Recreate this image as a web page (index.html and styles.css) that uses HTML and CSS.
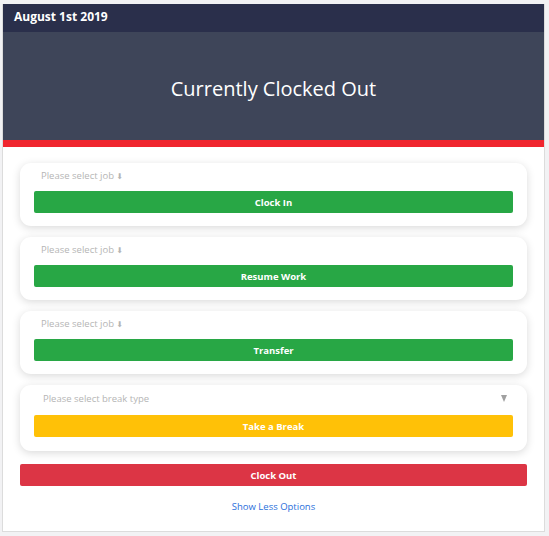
FILE: index.html
```html
<!DOCTYPE html>
<html>
<head>
<meta charset="utf-8">
<link rel="stylesheet" href="styles.css">
</head>
<body>
<div class="panel">
  <div class="date-bar">August 1st 2019</div>
  <div class="status">Currently Clocked Out</div>
  <div class="accent"></div>
  <div class="content">
    <div class="card">
      <div class="select">Please select job <span class="arrow-down">&#11015;</span></div>
      <button class="btn green">Clock In</button>
    </div>
    <div class="card">
      <div class="select">Please select job <span class="arrow-down">&#11015;</span></div>
      <button class="btn green">Resume Work</button>
    </div>
    <div class="card">
      <div class="select">Please select job <span class="arrow-down">&#11015;</span></div>
      <button class="btn green">Transfer</button>
    </div>
    <div class="card last">
      <div class="select break"><span>Please select break type</span><span class="caret"></span></div>
      <button class="btn yellow">Take a Break</button>
    </div>
    <button class="btn red">Clock Out</button>
    <a class="less" href="#">Show Less Options</a>
  </div>
</div>
</body>
</html>
```

FILE: styles.css
```css
html, body {
  margin: 0;
  padding: 0;
  background: #f2f2f4;
  font-family: "Open Sans", "DejaVu Sans", sans-serif;
}
.panel {
  margin: 4px 3px 0 2px;
  width: 543px;
  box-sizing: border-box;
  background: #fff;
  border: 1px solid #dcdcdc;
  border-top: none;
  display: flex;
  flex-direction: column;
}
.date-bar {
  background: #2a2f4b;
  color: #fff;
  font-weight: 700;
  font-size: 12px;
  height: 28px;
  line-height: 26px;
  padding-left: 11px;
}
.status {
  background: #3e4559;
  color: #fff;
  font-size: 20px;
  height: 108px;
  display: flex;
  align-items: center;
  justify-content: center;
  padding-top: 5px;
  box-sizing: border-box;
}
.accent {
  height: 7px;
  background: #f0262f;
}
.content {
  padding: 16px 17px 18px 17px;
  display: flex;
  flex-direction: column;
}
.card {
  background: #fff;
  border-radius: 11px;
  box-shadow: 0 2px 8px rgba(0,0,0,0.15);
  padding: 6px 14px 13px 14px;
  margin-bottom: 11px;
  display: flex;
  flex-direction: column;
}
.card.last {
  padding-top: 7px;
  padding-bottom: 14px;
  margin-bottom: 13px;
}
.select {
  color: #b5b5b5;
  font-size: 9.5px;
  height: 14px;
  line-height: 14px;
  padding-left: 7px;
  margin-bottom: 8px;
}
.arrow-down {
  font-size: 8px;
}
.select.break {
  display: flex;
  justify-content: space-between;
  padding-left: 9px;
  padding-right: 6px;
  height: 14px;
  margin-bottom: 9px;
}
.caret {
  width: 0;
  height: 0;
  border-left: 3.5px solid transparent;
  border-right: 3.5px solid transparent;
  border-top: 7px solid #a0a0a0;
  margin-top: 3px;
}
.btn {
  border: none;
  border-radius: 2px;
  height: 22px;
  color: #fff;
  font-family: inherit;
  font-weight: 700;
  font-size: 9.5px;
  padding: 0;
  display: block;
  width: 100%;
}
.green { background: #28a745; }
.yellow { background: #ffc107; }
.red { background: #dc3545; }
.less {
  color: #2a6fdb;
  font-size: 9.5px;
  line-height: 13px;
  text-decoration: none;
  text-align: center;
  margin-top: 14px;
}
```
